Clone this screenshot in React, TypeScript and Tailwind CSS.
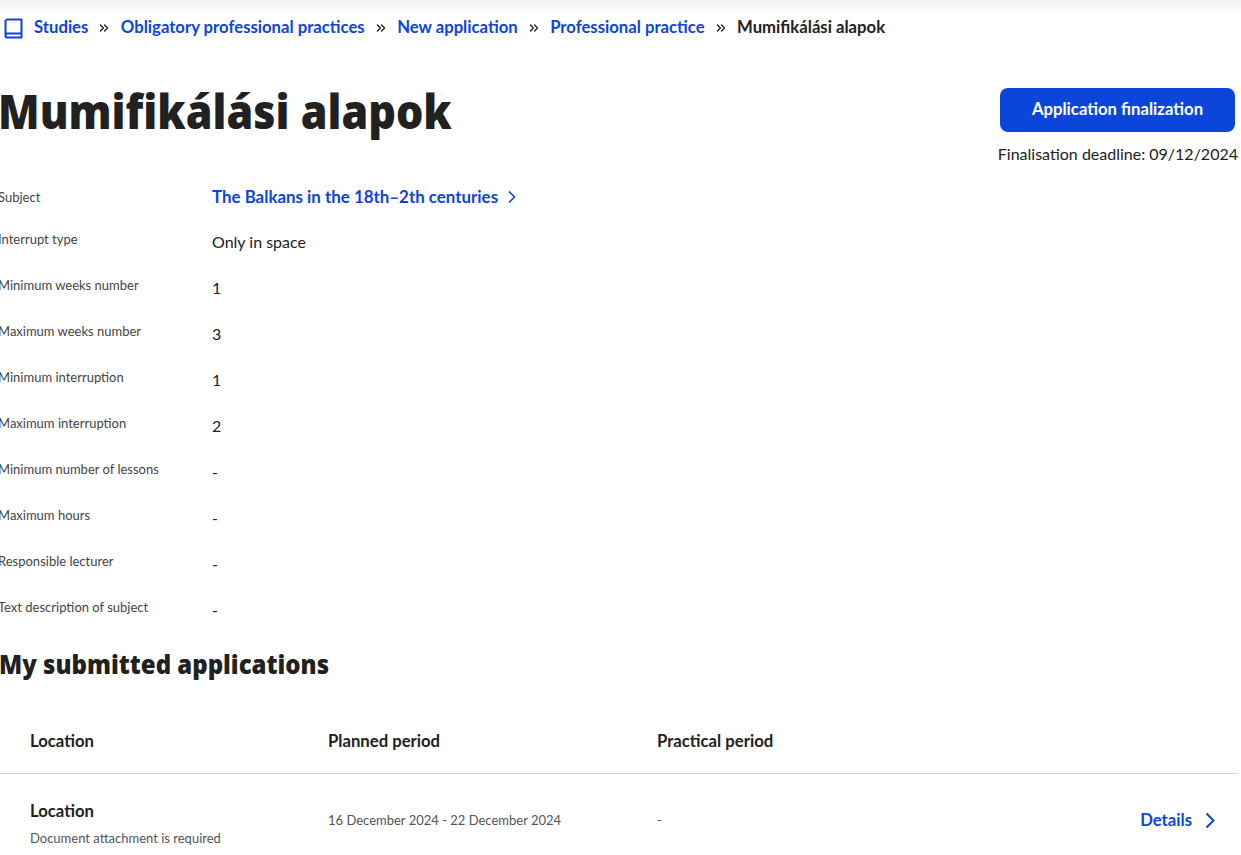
import { ChevronRight, ChevronsRight } from "lucide-react";

const rows: [string, string][] = [
  ["Interrupt type", "Only in space"],
  ["Minimum weeks number", "1"],
  ["Maximum weeks number", "3"],
  ["Minimum interruption", "1"],
  ["Maximum interruption", "2"],
  ["Minimum number of lessons", "-"],
  ["Maximum hours", "-"],
  ["Responsible lecturer", "-"],
  ["Text description of subject", "-"],
];

function Sep() {
  return <ChevronsRight className="ml-[9px] mr-[9.5px] w-[14px] h-[14px] text-[#222]" strokeWidth={2.5} />;
}

export default function App() {
  const lato = { fontFamily: "Lato, sans-serif" };
  return (
    <div className="h-[855px] w-[1241px] overflow-hidden bg-white text-[#212121] relative" style={lato}>
      <div className="absolute inset-x-0 top-0 h-[16px] bg-gradient-to-b from-[#f3f3f3] to-white" />
      <nav className="relative flex items-center h-[54px] pt-[2px] pl-[4px] text-[16.7px] font-bold text-[#0b45da]">
        <svg width="20" height="21" viewBox="0 0 20 21" fill="none" stroke="#0b45da" strokeWidth="2" className="mr-[10px]">
          <path d="M1.5 17V3.5A2 2 0 0 1 3.5 1.5H17.5V15.5H3.5A2 2 0 0 0 1.5 17.5A2 2 0 0 0 3.5 19.5H17.5V15.5" strokeLinejoin="round" />
        </svg>
        <span>Studies</span>
        <Sep />
        <span>Obligatory professional practices</span>
        <Sep />
        <span>New application</span>
        <Sep />
        <span>Professional practice</span>
        <Sep />
        <span className="text-[#212121]">Mumifikálási alapok</span>
      </nav>

      <div className="flex justify-between items-start h-[116px]">
        <h1 className="mt-[25px] -ml-[2px] text-[47px] leading-[64px] font-black origin-left scale-x-[0.916] whitespace-nowrap text-[#212121]" style={{ fontFamily: '"Noto Sans", sans-serif' }}>
          Mumifikálási alapok
        </h1>
        <div className="mt-[34px] mr-[3px] flex flex-col items-end">
          <button className="w-[235px] h-[44px] mr-[3px] pb-[1px] rounded-[8px] bg-[#0b45da] text-white text-[16.7px] font-bold">
            Application finalization
          </button>
          <div className="mt-[12px] text-[16px] leading-[20px]">Finalisation deadline: 09/12/2024</div>
        </div>
      </div>

      <dl className="mt-[14px] -ml-[2px]">
        <div className="flex h-[42px]">
          <dt className="w-[214px] pt-[3px] text-[13px] leading-[20px] text-[#444]">Subject</dt>
          <dd className="flex items-center h-[26px] text-[16.9px] font-bold text-[#0b45da]">
            The Balkans in the 18th–2th centuries
            <ChevronRight className="ml-[4px] w-[20px] h-[20px]" strokeWidth={2} />
          </dd>
        </div>
        {rows.map(([k, v]) => (
          <div className="flex h-[46px]" key={k}>
            <dt className="w-[214px] pt-[3px] text-[13px] leading-[20px] text-[#444]">{k}</dt>
            <dd className="pt-[4px] text-[16px] leading-[24px]">{v}</dd>
          </div>
        ))}
      </dl>

      <h2 className="mt-[8px] -ml-[1px] text-[26.2px] leading-[32px] font-black origin-left scale-x-[0.916] whitespace-nowrap" style={{ fontFamily: '"Noto Sans", sans-serif' }}>
        My submitted applications
      </h2>

      <div className="mt-[32px] w-[1238px]">
        <div className="flex h-[62px] pl-[30px] pb-[2px] items-center border-b border-[#d4d4d4] text-[16.7px] font-bold">
          <div className="w-[298px]">Location</div>
          <div className="w-[329px]">Planned period</div>
          <div>Practical period</div>
        </div>
        <div className="flex pl-[30px] pt-[24px] items-center">
          <div className="w-[298px]">
            <div className="text-[16.7px] leading-[26px] font-bold">Location</div>
            <div className="mt-[5px] text-[13px] leading-[18px] text-[#555]">Document attachment is required</div>
          </div>
          <div className="w-[329px] mb-[4px] text-[13px] text-[#555]">16 December 2024 - 22 December 2024</div>
          <div className="flex-1 mb-[4px] text-[13px] text-[#555]">-</div>
          <div className="flex items-center mb-[4px] mr-[23px] text-[16.7px] font-bold text-[#0b45da]">
            Details
            <svg width="10" height="17" viewBox="0 0 10 17" fill="none" stroke="#0b45da" strokeWidth="2" className="ml-[13px]">
              <path d="M1.5 1.5L8.5 8.5L1.5 15.5" />
            </svg>
          </div>
        </div>
      </div>
    </div>
  );
}
